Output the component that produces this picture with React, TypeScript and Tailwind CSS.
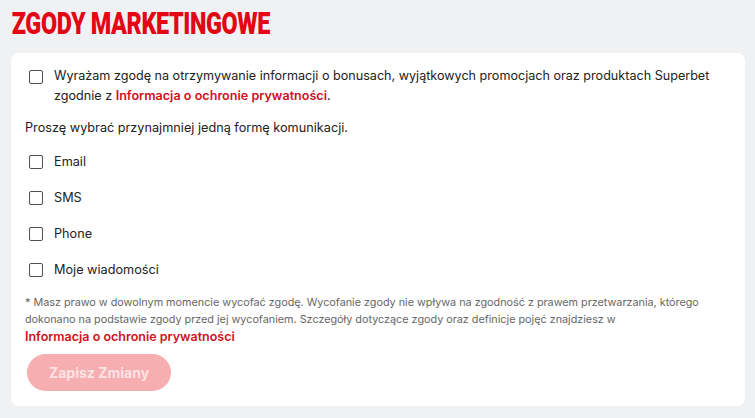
import { useState } from "react";

const channels = ["Email", "SMS", "Phone", "Moje wiadomości"];

function Box({ checked, onToggle }: { checked: boolean; onToggle: () => void }) {
  return (
    <button
      type="button"
      onClick={onToggle}
      className={`flex h-[14px] w-[14px] shrink-0 items-center justify-center rounded-[2px] border-[1.5px] ${
        checked ? "border-[#e30613] bg-[#e30613]" : "border-[#505050] bg-white"
      }`}
    />
  );
}

export default function App() {
  const [main, setMain] = useState(false);
  const [picked, setPicked] = useState<string[]>([]);

  const toggle = (c: string) =>
    setPicked((p) => (p.includes(c) ? p.filter((x) => x !== c) : [...p, c]));

  return (
    <div className="min-h-[418px] bg-[#f0f1f3] pl-[11px] pr-[10px] pt-[6px] font-['Inter',sans-serif] text-[#222]">
      <h1 className="origin-left scale-x-[0.73] whitespace-nowrap pl-[1px] font-['Roboto',sans-serif] text-[32px] font-black leading-[34px] tracking-[-0.5px] text-[#e30613]">
        ZGODY MARKETINGOWE
      </h1>

      <div className="mt-[13px] rounded-[8px] bg-white pb-[15px] pl-[14px] pr-[14px] pt-[13px]">
        <div className="flex gap-[11px] pl-[4px]">
          <div className="pt-[4px]">
            <Box checked={main} onToggle={() => setMain(!main)} />
          </div>
          <p className="text-[12.6px] leading-[20px]">
            Wyrażam zgodę na otrzymywanie informacji o bonusach, wyjątkowych promocjach oraz produktach Superbet
            zgodnie z <span className="font-semibold text-[#d0101d]">Informacja o ochronie prywatności</span>.
          </p>
        </div>

        <p className="mt-[12px] text-[12.7px] leading-[20px]">Proszę wybrać przynajmniej jedną formę komunikacji.</p>

        <div className="mt-[14px] flex flex-col gap-[16px] pl-[4px]">
          {channels.map((c) => (
            <label key={c} className="flex h-[20px] items-center gap-[11px] text-[12.7px]">
              <Box checked={picked.includes(c)} onToggle={() => toggle(c)} />
              <span>{c}</span>
            </label>
          ))}
        </div>

        <p className="mt-[14px] text-[10.8px] leading-[17px] text-[#666]">
          * Masz prawo w dowolnym momencie wycofać zgodę. Wycofanie zgody nie wpływa na zgodność z prawem przetwarzania, którego
          dokonano na podstawie zgody przed jej wycofaniem. Szczegóły dotyczące zgody oraz definicje pojęć znajdziesz w
        </p>
        <a className="block text-[12.5px] font-semibold leading-[17px] text-[#d0101d]" href="#">
          Informacja o ochronie prywatności
        </a>

        <button
          type="button"
          disabled
          className="mt-[9px] ml-[2px] h-[37px] w-[144px] rounded-full bg-[#f6aeb1] text-[14px] font-bold text-[#fde3e4]"
        >
          Zapisz Zmiany
        </button>
      </div>
    </div>
  );
}
